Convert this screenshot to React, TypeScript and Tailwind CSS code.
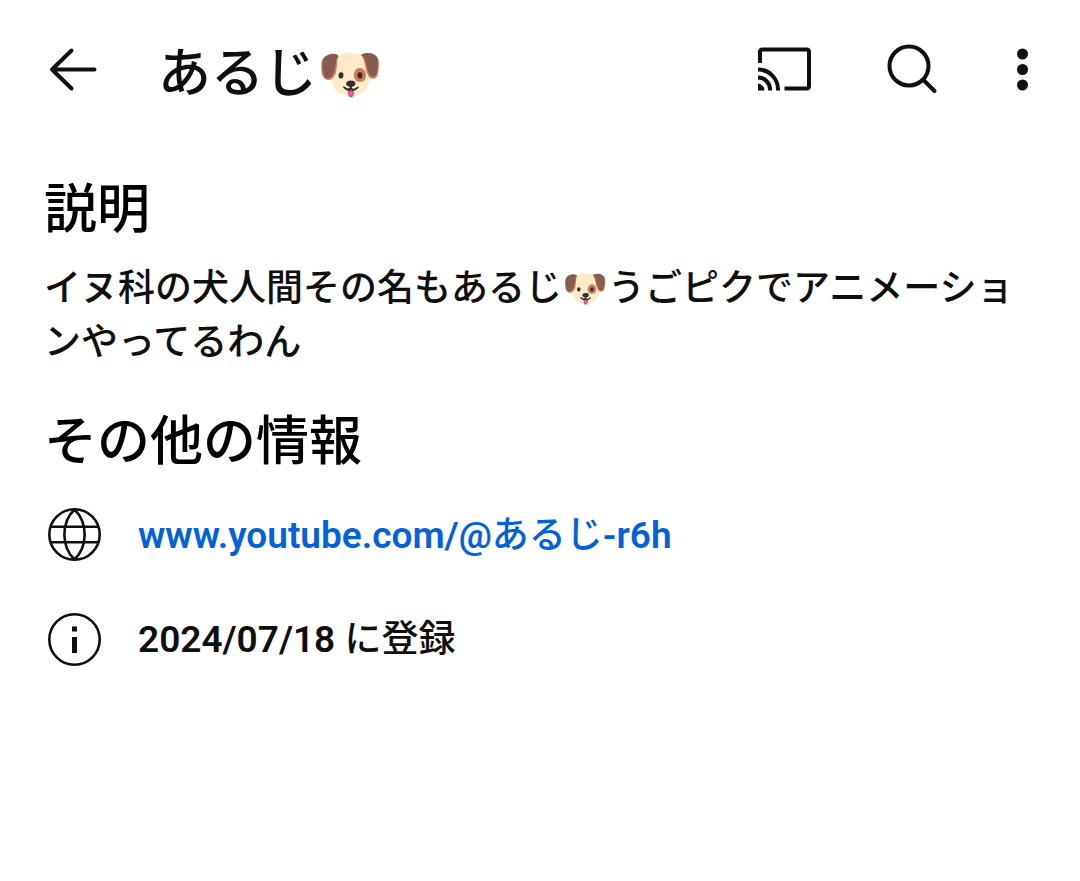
const textFont = "font-['Roboto','Noto_Sans_CJK_JP',sans-serif]";

const iconButtonClass = "flex size-16 shrink-0 items-center justify-center";

function BackIcon() {
  return (
    <svg className="size-16" viewBox="0 0 64 64" fill="none" stroke="currentColor" strokeWidth="4" strokeLinecap="round" strokeLinejoin="round" aria-hidden="true">
      <path d="M54.500 32.500H12M31.500 13.500L12 32.500L31.500 51.500" />
    </svg>
  );
}

function CastIcon() {
  return (
    <svg className="size-16" viewBox="0 0 64 64" fill="none" stroke="currentColor" strokeWidth="4" aria-hidden="true">
      <path d="M8 26V15Q8 12.500 10.500 12.500H54.500Q57 12.500 57 15V49Q57 51.500 54.500 51.500H32.500" />
      <path d="M6 32.500A20 20 0 0 1 26 52.500V53.500M6 40.500A12 12 0 0 1 18 52.500V53.500" />
      <path d="M6 46.500A7 7 0 0 1 12.500 53.500H6Z" fill="currentColor" stroke="none" />
    </svg>
  );
}

function SearchIcon() {
  return (
    <svg className="size-16" viewBox="0 0 64 64" fill="none" stroke="currentColor" strokeWidth="4" strokeLinecap="round" aria-hidden="true">
      <circle cx="29" cy="29" r="19.500" />
      <path d="M43.500 43L54.500 54" />
    </svg>
  );
}

function MoreIcon() {
  return (
    <svg className="size-16" viewBox="0 0 64 64" fill="currentColor" aria-hidden="true">
      <circle cx="30.500" cy="17" r="5.500" />
      <circle cx="30.500" cy="32.500" r="5.500" />
      <circle cx="30.500" cy="48" r="5.500" />
    </svg>
  );
}

function GlobeIcon() {
  return (
    <svg className="size-16 shrink-0" viewBox="0 0 64 64" fill="none" stroke="currentColor" strokeWidth="2.600" aria-hidden="true">
      <circle cx="30.500" cy="30.500" r="25.200" />
      <path d="M30.500 5.500C17 18.500 17 42.500 30.500 55.500C44 42.500 44 18.500 30.500 5.500ZM7 22.800H54M7 38.200H54" />
    </svg>
  );
}

function InfoIcon() {
  return (
    <svg className="size-16 shrink-0" viewBox="0 0 64 64" aria-hidden="true">
      <circle cx="30.500" cy="31.500" r="25.200" fill="none" stroke="currentColor" strokeWidth="2.600" />
      <path d="M28 18.500H33V23.500H28ZM28 29H33V45H28Z" fill="currentColor" />
    </svg>
  );
}

function App() {
  return (
    <div className={`min-h-screen bg-white text-[#0f0f0f] ${textFont}`}>
      <header className="flex h-[138px] items-center pl-10 pr-6">
        <button type="button" className={iconButtonClass} aria-label="戻る">
          <BackIcon />
        </button>
        <h1 className="ml-[54px] flex-1 pt-[10px] text-[53px] font-medium leading-[64px]">あるじ🐶</h1>
        <div className="flex items-center">
          <button type="button" className={iconButtonClass} aria-label="キャスト">
            <CastIcon />
          </button>
          <button type="button" className={`${iconButtonClass} ml-16`} aria-label="検索">
            <SearchIcon />
          </button>
          <button type="button" className={`${iconButtonClass} ml-12`} aria-label="その他">
            <MoreIcon />
          </button>
        </div>
      </header>

      <main className="px-11 pt-10">
        <section>
          <h2 className="text-[53px] font-medium leading-[64px] text-black">説明</h2>
          <p className="mt-5 text-[37px] font-medium leading-[54px]">
            イヌ科の犬人間その名もあるじ🐶うごピクでアニメーションやってるわん
          </p>
        </section>

        <section className="mt-10">
          <h2 className="text-[53px] font-medium leading-[64px] text-black">その他の情報</h2>
          <ul className="mt-[30px] flex flex-col gap-10 text-[37px] font-semibold leading-[54px]">
            <li className="flex items-center gap-[30px]">
              <GlobeIcon />
              <a href="https://www.youtube.com/@あるじ-r6h" className="text-[#0362d8]">
                www.youtube.com/@<span className="font-medium">あるじ</span>-r6h
              </a>
            </li>
            <li className="flex items-center gap-[30px]">
              <InfoIcon />
              <span>
                2024/07/18 <span className="font-medium">に登録</span>
              </span>
            </li>
          </ul>
        </section>
      </main>
    </div>
  );
}

export default App;
